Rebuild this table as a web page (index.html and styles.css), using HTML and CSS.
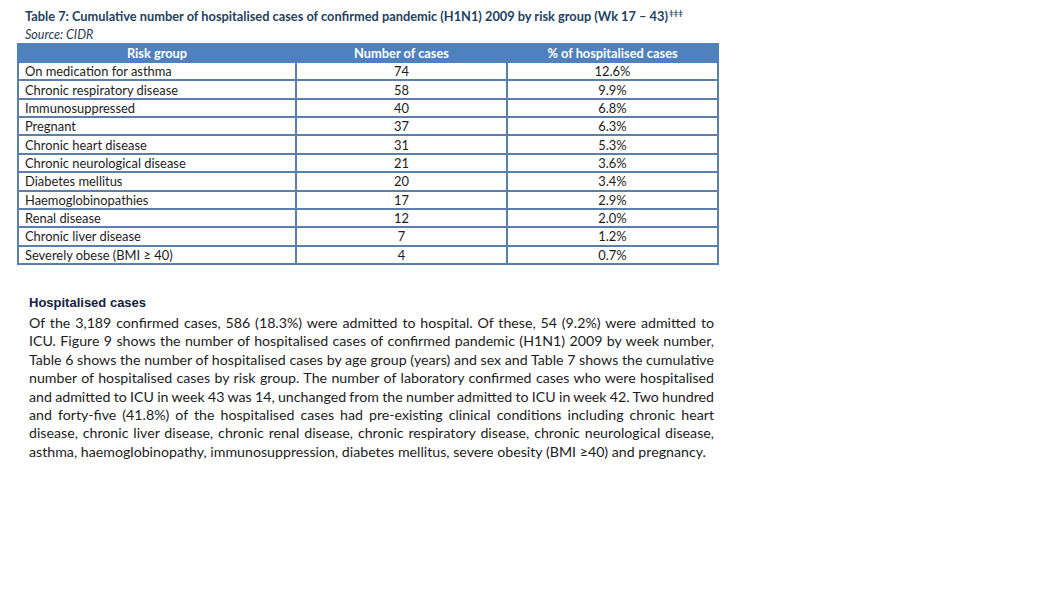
FILE: index.html
```html
<!DOCTYPE html>
<html>
<head>
<meta charset="utf-8">
<link rel="stylesheet" href="styles.css">
</head>
<body>
<div class="page">
  <div class="caption">
    <div class="title">Table 7: Cumulative number of hospitalised cases of confirmed pandemic (H1N1) 2009 by risk group (Wk 17 – 43)<sup class="mark">‡‡‡</sup></div>
    <div class="source">Source: CIDR</div>
  </div>
  <table class="risk">
    <thead>
      <tr><th class="c1">Risk group</th><th class="c2">Number of cases</th><th class="c3">% of hospitalised cases</th></tr>
    </thead>
    <tbody>
      <tr><td class="name">On medication for asthma</td><td class="num">74</td><td class="num">12.6%</td></tr>
      <tr><td class="name">Chronic respiratory disease</td><td class="num">58</td><td class="num">9.9%</td></tr>
      <tr><td class="name">Immunosuppressed</td><td class="num">40</td><td class="num">6.8%</td></tr>
      <tr><td class="name">Pregnant</td><td class="num">37</td><td class="num">6.3%</td></tr>
      <tr><td class="name">Chronic heart disease</td><td class="num">31</td><td class="num">5.3%</td></tr>
      <tr><td class="name">Chronic neurological disease</td><td class="num">21</td><td class="num">3.6%</td></tr>
      <tr><td class="name">Diabetes mellitus</td><td class="num">20</td><td class="num">3.4%</td></tr>
      <tr><td class="name">Haemoglobinopathies</td><td class="num">17</td><td class="num">2.9%</td></tr>
      <tr><td class="name">Renal disease</td><td class="num">12</td><td class="num">2.0%</td></tr>
      <tr><td class="name">Chronic liver disease</td><td class="num">7</td><td class="num">1.2%</td></tr>
      <tr><td class="name">Severely obese (BMI ≥ 40)</td><td class="num">4</td><td class="num">0.7%</td></tr>
    </tbody>
  </table>
  <div class="section">
    <h2 class="heading">Hospitalised cases</h2>
    <p class="body">
      <span class="line">Of the 3,189 confirmed cases, 586 (18.3%) were admitted to hospital. Of these, 54 (9.2%) were admitted to</span>
      <span class="line">ICU. Figure 9 shows the number of hospitalised cases of confirmed pandemic (H1N1) 2009 by week number,</span>
      <span class="line tight">Table 6 shows the number of hospitalised cases by age group (years) and sex and Table 7 shows the cumulative</span>
      <span class="line">number of hospitalised cases by risk group. The number of laboratory confirmed cases who were hospitalised</span>
      <span class="line tight">and admitted to ICU in week 43 was 14, unchanged from the number admitted to ICU in week 42. Two hundred</span>
      <span class="line">and forty-five (41.8%) of the hospitalised cases had pre-existing clinical conditions including chronic heart</span>
      <span class="line">disease, chronic liver disease, chronic renal disease, chronic respiratory disease, chronic neurological disease,</span>
      <span class="line last">asthma, haemoglobinopathy, immunosuppression, diabetes mellitus, severe obesity (BMI ≥40) and pregnancy.</span>
    </p>
  </div>
</div>
</body>
</html>
```
FILE: styles.css
```css
html, body {
  margin: 0;
  padding: 0;
  background: #ffffff;
}
.page {
  padding: 9px 0 0 17px;
  font-family: Lato, "Open Sans", sans-serif;
  color: #1c1c1c;
}
.caption {
  padding-left: 8px;
}
.title {
  font-weight: bold;
  font-size: 12.8px;
  line-height: 15px;
  color: #243f60;
}
.mark {
  font-size: 8px;
  line-height: 0;
  vertical-align: 5px;
  margin-left: 1px;
}
.source {
  font-style: italic;
  font-size: 12.5px;
  line-height: 15px;
  margin-top: 3px;
  color: #2a3a50;
}
.risk {
  margin-top: 1px;
  border-collapse: collapse;
  font-size: 12.9px;
  table-layout: fixed;
  width: 700px;
}
.risk th {
  background: #4f81bd;
  color: #ffffff;
  font-weight: bold;
  font-size: 12.8px;
  height: 16px;
  padding: 0 0 2px 0;
  line-height: 14px;
  border: 2px solid #4f81bd;
  border-bottom: none;
}
.c1 { width: 276px; }
.c2 { width: 209px; }
.c3 { width: 209px; }
.risk td {
  border: 2px solid #5a7fab;
  height: 16.36px;
  padding: 0 6px;
  line-height: 14px;
  color: #1c1c1c;
  white-space: nowrap;
}
.risk tr:first-child td { border-top: none; }
.num { text-align: center; }
.section {
  margin-top: 30px;
  padding-left: 12px;
  width: 685px;
}
.heading {
  margin: 0;
  font-family: "Liberation Sans", Arial, sans-serif;
  font-weight: bold;
  font-size: 13px;
  line-height: 15px;
  color: #14213d;
}
.body {
  margin: 4px 0 0 0;
  font-size: 14.2px;
  line-height: 18.4px;
  color: #1c1c1c;
}
.line {
  display: block;
  text-align: justify;
  text-align-last: justify;
  white-space: nowrap;
}
.line.tight {
  word-spacing: -0.6px;
}
.line.last {
  text-align-last: left;
}
```
